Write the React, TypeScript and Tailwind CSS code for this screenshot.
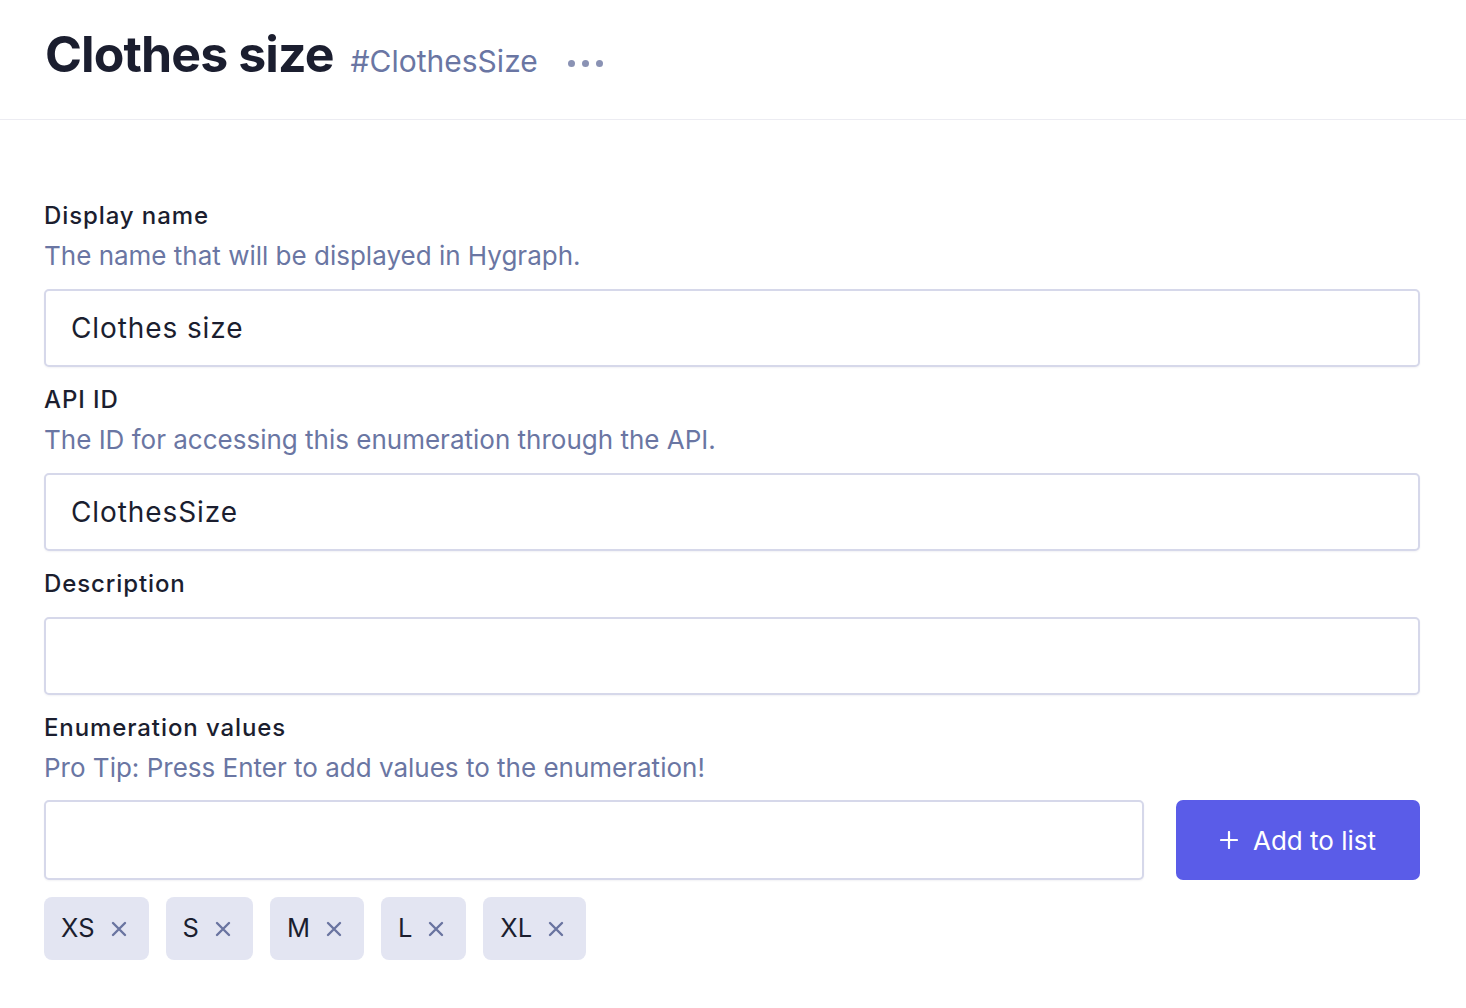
import React from "react";

function Field({ label, desc, value }: { label: string; desc?: string; value?: string }) {
  return (
    <div className="flex flex-col">
      <div className="h-8 leading-8 text-[24px] font-medium tracking-[0.9px] text-[#1b1e2f]">{label}</div>
      {desc && <div className="mt-1 h-10 leading-10 text-[26px] text-[#6a76a3]">{desc}</div>}
      <div className={`${desc ? "mt-[13px]" : "mt-[17px]"} h-[78px] rounded-[5px] border-2 border-[#d6d8ea] bg-white shadow-[0_1px_2px_rgba(30,40,90,0.06)] flex items-center px-[25px] text-[28px] tracking-[0.9px] text-[#1b1e2f]`}>
        {value}
      </div>
    </div>
  );
}

function Tag({ text }: { text: string }) {
  return (
    <div className="h-[63px] rounded-[8px] bg-[#e3e5f2] flex items-center pl-[17px] pr-[22px] gap-[16px]">
      <span className="text-[25.5px] text-[#1b1e2f]">{text}</span>
      <svg width="16" height="16" viewBox="0 0 16 16" fill="none" stroke="#6a74a0" strokeWidth="2.4" strokeLinecap="round">
        <path d="M2 2 L14 14 M14 2 L2 14" />
      </svg>
    </div>
  );
}

export default function App() {
  return (
    <div className="min-h-screen bg-white" style={{ fontFamily: "Inter, 'Noto Sans', sans-serif" }}>
      <div className="h-[120px] border-b border-[#ececf2] flex items-end pb-[40px] pl-[45px]">
        <div className="flex items-baseline">
          <span className="text-[50px] font-bold text-[#1b1e2f] leading-none tracking-[-0.9px]">Clothes size</span>
          <span className="ml-[17px] text-[30px] text-[#6a76a3] leading-none">#ClothesSize</span>
          <span className="ml-[30px] flex items-center gap-[7px] self-center relative top-[9px]">
            <span className="w-[7px] h-[7px] rounded-full bg-[#8a92b4]" />
            <span className="w-[7px] h-[7px] rounded-full bg-[#8a92b4]" />
            <span className="w-[7px] h-[7px] rounded-full bg-[#8a92b4]" />
          </span>
        </div>
      </div>
      <div className="pl-[44px] pr-[46px] pt-[80px] flex flex-col gap-[17px]">
        <Field label="Display name" desc="The name that will be displayed in Hygraph." value="Clothes size" />
        <Field label="API ID" desc="The ID for accessing this enumeration through the API." value="ClothesSize" />
        <Field label="Description" />
        <div className="flex flex-col">
          <div className="h-8 leading-8 text-[24px] font-medium tracking-[0.9px] text-[#1b1e2f]">Enumeration values</div>
          <div className="mt-1 h-10 leading-10 text-[26px] text-[#6a76a3]">Pro Tip: Press Enter to add values to the enumeration!</div>
          <div className="mt-[12px] flex gap-[32px]">
            <div className="flex-1 h-[80px] rounded-[5px] border-2 border-[#d6d8ea] bg-white shadow-[0_1px_2px_rgba(30,40,90,0.06)]" />
            <button className="w-[244px] h-[80px] rounded-[7px] bg-[#5a5ce8] text-white flex items-center justify-center gap-[15px] text-[26px]">
              <svg width="18" height="18" viewBox="0 0 18 18" fill="none" stroke="white" strokeWidth="2.2" strokeLinecap="round">
                <path d="M9 1 V17 M1 9 H17" />
              </svg>
              <span>Add to list</span>
            </button>
          </div>
          <div className="mt-[17px] flex gap-[17px]">
            {["XS", "S", "M", "L", "XL"].map((t) => (
              <Tag key={t} text={t} />
            ))}
          </div>
        </div>
      </div>
    </div>
  );
}
